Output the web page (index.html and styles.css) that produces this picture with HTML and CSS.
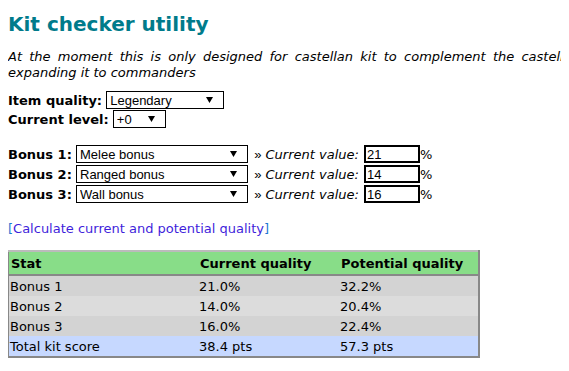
FILE: index.html
```html
<!DOCTYPE html>
<html lang="en">
  <head>
    <meta charset="UTF-8" />
    <title>Kit checker utility</title>
    <link rel="stylesheet" href="styles.css">
  </head>
  <body>
    <div id="page">
      <h2>Kit checker utility</h2>
      <p class="intro"><span class="wide">At the moment this is only designed for castellan kit to complement the castellan calculator, before</span><br />expanding it to commanders</p>

      <div class="field">
        <b>Item quality:</b>
        <select class="sel-quality">
          <option>Legendary</option>
        </select>
      </div>
      <div class="field">
        <b>Current level:</b>
        <select class="sel-level">
          <option>+0</option>
        </select>
      </div>

      <div class="bonuses">
        <div class="field">
          <b>Bonus 1:</b>
          <select class="sel-bonus"><option>Melee bonus</option></select>
          <span class="arrow">&raquo;</span> <i>Current value:</i>
          <input type="text" value="21" />%
        </div>
        <div class="field">
          <b>Bonus 2:</b>
          <select class="sel-bonus"><option>Ranged bonus</option></select>
          <span class="arrow">&raquo;</span> <i>Current value:</i>
          <input type="text" value="14" />%
        </div>
        <div class="field">
          <b>Bonus 3:</b>
          <select class="sel-bonus"><option>Wall bonus</option></select>
          <span class="arrow">&raquo;</span> <i>Current value:</i>
          <input type="text" value="16" />%
        </div>
      </div>

      <p class="calc">[<a href="#">Calculate current and potential quality</a>]</p>

      <table class="results">
        <tr>
          <th class="col-stat">Stat</th>
          <th class="col-cur">Current quality</th>
          <th>Potential quality</th>
        </tr>
        <tr class="odd"><td>Bonus 1</td><td>21.0%</td><td>32.2%</td></tr>
        <tr class="even"><td>Bonus 2</td><td>14.0%</td><td>20.4%</td></tr>
        <tr class="odd"><td>Bonus 3</td><td>16.0%</td><td>22.4%</td></tr>
        <tr class="total"><td>Total kit score</td><td>38.4 pts</td><td>57.3 pts</td></tr>
      </table>
    </div>
  </body>
</html>
```

FILE: styles.css
```css
body {
  margin: 8px;
  font-family: "DejaVu Sans", Verdana, sans-serif;
  font-size: 13px;
  color: #000;
  overflow: hidden;
}
#page {
  width: 560px;
}
h2 {
  margin: 4px 0 0;
  font-size: 20px;
  color: #007b8b;
  line-height: 24px;
}
.intro {
  margin: 13px 0 10px;
  font-style: italic;
  white-space: nowrap;
  line-height: 16px;
}
.intro .wide {
  word-spacing: 3.1px;
}
.field {
  line-height: 19px;
  height: 19px;
}
select {
  -webkit-appearance: none;
  appearance: none;
  font-family: "Liberation Sans", Arial, sans-serif;
  font-size: 13px;
  height: 18px;
  border: 1px solid #000;
  border-radius: 0;
  background: #fff url("data:image/svg+xml,%3Csvg xmlns='http://www.w3.org/2000/svg' width='7' height='6'%3E%3Cpath d='M0 0h7L3.5 6z' fill='%23000'/%3E%3C/svg%3E") no-repeat right 10px center;
  padding: 0 0 0 3px;
  vertical-align: top;
  color: #000;
}
.sel-quality {
  width: 118px;
}
.sel-level {
  width: 53px;
}
.sel-bonus {
  width: 172px;
}
.bonuses {
  margin-top: 16px;
}
.bonuses .field {
  height: 20px;
}
.arrow {
  font-family: "Liberation Sans", Arial, sans-serif;
  margin-left: 2px;
}
input {
  font-family: "Liberation Sans", Arial, sans-serif;
  font-size: 13px;
  width: 50px;
  height: 14px;
  padding: 0 1px;
  border: 2px solid #000;
  vertical-align: top;
  margin: 0 0 0 1px;
}
.calc {
  margin: 16px 0 14px;
  color: #1e78d2;
}
.calc a {
  color: #3f1fdb;
  text-decoration: none;
}
.results {
  border-collapse: collapse;
  width: 473px;
  border: 2px solid #888;
  border-top-color: #bbb;
  margin-left: -1px;
}
.results th {
  background: #88dd88;
  text-align: left;
  height: 22px;
  padding: 0 0 0 2px;
  border-bottom: 2px solid #888;
}
.results td {
  height: 20px;
  padding: 0 0 0 1px;
}
.col-stat {
  width: 187px;
}
.col-cur {
  width: 139px;
}
.odd td {
  background: #d3d3d3;
}
.even td {
  background: #dcdcdc;
}
.total td {
  background: #c6d8ff;
}
```
